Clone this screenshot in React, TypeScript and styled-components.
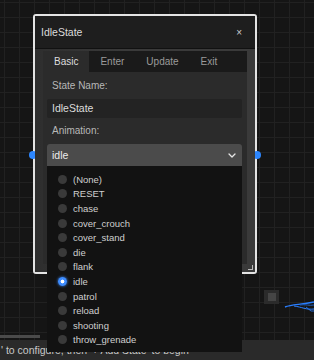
import React from "react"
import styled, { createGlobalStyle } from "styled-components"

const GlobalStyle = createGlobalStyle`
  html, body {
    margin: 0;
    padding: 0;
    background: #151515;
    overflow: hidden;
    font-family: "Liberation Sans", Arial, sans-serif;
  }
  * { box-sizing: border-box; }
`

const Page = styled.div`
  width: 314px;
  height: 360px;
  display: flex;
  flex-direction: column;
`

const Canvas = styled.div`
  position: relative;
  height: 340px;
  background-color: #151515;
  background-image: linear-gradient(#212121 1px, transparent 1px),
    linear-gradient(90deg, #212121 1px, transparent 1px);
  background-size: 15px 15px;
  background-position: 4px 2px;
`

const StatusBar = styled.div`
  height: 20px;
  background: #2a2a2a;
  color: #c8c8c8;
  font-size: 10.5px;
  line-height: 20px;
  padding-left: 1px;
  white-space: nowrap;
  overflow: hidden;
`

const ScrollThumb = styled.div`
  position: absolute;
  left: 0;
  top: 335px;
  width: 40px;
  height: 3px;
  background: #4a4a4a;
`

const Node = styled.div`
  position: absolute;
  left: 264px;
  top: 290px;
  width: 15px;
  height: 14px;
  background: #2b2b2b;
  display: flex;
  align-items: center;
  justify-content: center;
`

const NodeInner = styled.div`
  width: 8px;
  height: 8px;
  background: #454545;
`

const Wire = styled.svg`
  position: absolute;
  left: 284px;
  top: 296px;
`

const Dialog = styled.div`
  position: absolute;
  left: 33px;
  top: 14px;
  width: 224px;
  height: 260px;
  border: 2px solid #e4e4e4;
  border-radius: 3px;
  background: #363636;
  display: flex;
  flex-direction: column;
  z-index: 5;
`

const Header = styled.div`
  height: 33px;
  background: #1e1e1e;
  border-bottom: 1px solid #111;
  display: flex;
  align-items: center;
  justify-content: space-between;
  padding: 0 13px 0 6px;
  color: #dcdcdc;
  font-size: 10.5px;
`

const Close = styled.span`
  font-size: 10px;
  color: #cfcfcf;
`

const Body = styled.div`
  flex: 1;
  padding: 2px 8px 8px;
  background: linear-gradient(90deg, #2e2e2e, #3a3a3a 40%, #3a3a3a);
  position: relative;
`

const Panel = styled.div`
  height: 100%;
  background: #2b2b2b;
  display: flex;
  flex-direction: column;
`

const TabBar = styled.div`
  height: 21px;
  background: #1a1a1a;
  display: flex;
`

const Tab = styled.div<{ $active?: boolean }>`
  padding: 0 11px;
  display: flex;
  align-items: center;
  font-size: 10px;
  color: ${(p) => (p.$active ? "#dedede" : "#9a9a9a")};
  background: ${(p) => (p.$active ? "#2b2b2b" : "transparent")};
`

const Content = styled.div`
  padding: 7px 5px 0 4px;
  display: flex;
  flex-direction: column;
`

const Label = styled.div`
  height: 14px;
  line-height: 14px;
  padding-left: 5px;
  font-size: 10px;
  color: #b8b8b8;
  margin-bottom: 6px;
`

const Input = styled.div`
  height: 19px;
  background: #232323;
  color: #dcdcdc;
  font-size: 10.5px;
  line-height: 19px;
  padding-left: 5px;
  margin-bottom: 6px;
  border-radius: 2px;
`

const SelectWrap = styled.div`
  position: relative;
`

const Select = styled.div`
  height: 22px;
  background: #4b4b4b;
  border-radius: 3px 3px 0 0;
  color: #ececec;
  font-size: 10.5px;
  display: flex;
  align-items: center;
  justify-content: space-between;
  padding: 0 6px 0 5px;
`

const Menu = styled.div`
  position: absolute;
  left: 0;
  top: 22px;
  width: 195px;
  height: 186px;
  background: #121212;
  padding: 6px 0 5px 11px;
  z-index: 20;
`

const Option = styled.div`
  height: 14.6px;
  display: flex;
  align-items: center;
  gap: 6px;
  font-size: 9.5px;
  color: #cfcfcf;
`

const Radio = styled.span<{ $checked?: boolean }>`
  width: 9px;
  height: 9px;
  border-radius: 50%;
  flex: none;
  background: ${(p) =>
    p.$checked ? "radial-gradient(circle, #fff 0 1.6px, #3d8cff 2.2px)" : "#3a3a3a"};
  box-shadow: ${(p) => (p.$checked ? "0 0 3px #3d8cff" : "none")};
`

const Port = styled.span<{ $side: "left" | "right" }>`
  position: absolute;
  top: 135px;
  ${(p) => (p.$side === "left" ? "left: -6px;" : "right: -6px;")}
  width: 8px;
  height: 8px;
  border-radius: 50%;
  background: #2d87ff;
`

const Grip = styled.span`
  position: absolute;
  right: 2px;
  bottom: 2px;
  width: 5px;
  height: 5px;
  border-right: 1px solid #bbb;
  border-bottom: 1px solid #bbb;
`

const options = [
  "(None)",
  "RESET",
  "chase",
  "cover_crouch",
  "cover_stand",
  "die",
  "flank",
  "idle",
  "patrol",
  "reload",
  "shooting",
  "throw_grenade",
]

const Chevron = () => (
  <svg width="8" height="5" viewBox="0 0 8 5">
    <path d="M1 1l3 3 3-3" stroke="#e6e6e6" strokeWidth="1.3" fill="none" strokeLinecap="round" strokeLinejoin="round" />
  </svg>
)

export default function App() {
  const selected = "idle"
  return (
    <Page>
      <GlobalStyle />
      <Canvas>
        <ScrollThumb />
        <Node>
          <NodeInner />
        </Node>
        <Wire width="30" height="20" viewBox="0 0 30 20">
          <path d="M1 11 C8 8, 16 9, 30 6" stroke="#2a7fff" strokeWidth="1.4" fill="none" />
          <path d="M10 10 C18 11, 22 14, 30 13" stroke="#2a7fff" strokeWidth="1" fill="none" />
          <path d="M16 9 C22 8, 25 10, 30 9" stroke="#1f5fbf" strokeWidth="1" fill="none" />
          <path d="M22 11 L27 15 L30 15" stroke="#2a7fff" strokeWidth="0.8" fill="none" />
        </Wire>
        <Dialog>
          <Port $side="left" />
          <Port $side="right" />
          <Header>
            <span>IdleState</span>
            <Close>×</Close>
          </Header>
          <Body>
            <Panel>
              <TabBar>
                <Tab $active>Basic</Tab>
                <Tab>Enter</Tab>
                <Tab>Update</Tab>
                <Tab>Exit</Tab>
              </TabBar>
              <Content>
                <Label>State Name:</Label>
                <Input>IdleState</Input>
                <Label>Animation:</Label>
                <SelectWrap>
                  <Select>
                    <span>idle</span>
                    <Chevron />
                  </Select>
                  <Menu>
                    {options.map((o) => (
                      <Option key={o}>
                        <Radio $checked={o === selected} />
                        {o}
                      </Option>
                    ))}
                  </Menu>
                </SelectWrap>
              </Content>
            </Panel>
            <Grip />
          </Body>
        </Dialog>
      </Canvas>
      <StatusBar>' to configure, then '+ Add State' to begin</StatusBar>
    </Page>
  )
}
